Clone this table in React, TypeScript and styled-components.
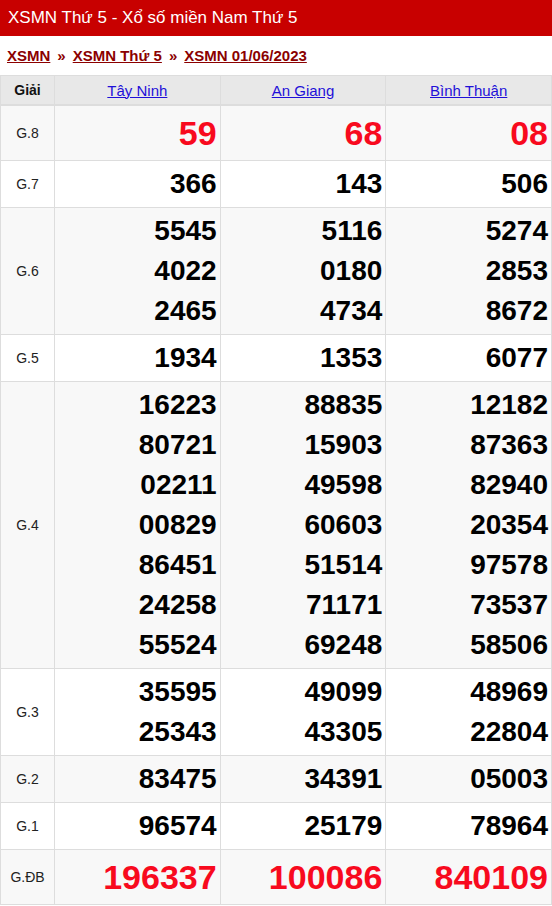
import React from 'react';
import styled, { createGlobalStyle } from 'styled-components';

const GlobalStyle = createGlobalStyle`
  body {
    margin: 0;
    background: #fff;
    font-family: "Liberation Sans", Arial, sans-serif;
  }
`;

const Page = styled.div`
  width: 552px;
`;

const TitleBar = styled.h1`
  margin: 0;
  height: 36px;
  line-height: 36px;
  padding: 0 8px;
  background: #c80000;
  color: #fff;
  font-size: 17px;
  font-weight: normal;
`;

const Breadcrumb = styled.nav`
  display: flex;
  align-items: center;
  height: 39px;
  padding: 0 7px;
  font-size: 15px;
  font-weight: bold;
  color: #8b0000;
`;

const Crumb = styled.a`
  color: #8b0000;
  text-decoration: underline;
`;

const Sep = styled.span`
  margin: 0 7px;
`;

const Table = styled.table`
  width: 552px;
  border-collapse: collapse;
  table-layout: fixed;
`;

const HeadCell = styled.th<{ $label?: boolean }>`
  height: 28px;
  padding: 0;
  background: #e8e8e8;
  border: 1px solid #ddd;
  border-bottom: 2px solid #ddd;
  font-size: ${p => (p.$label ? '14px' : '15px')};
  font-weight: ${p => (p.$label ? 'bold' : 'normal')};
  color: #111;
  text-align: center;
`;

const ProvinceLink = styled.a`
  color: #1f10d8;
  text-decoration: underline;
`;

const Row = styled.tr<{ $shade: boolean }>`
  background: ${p => (p.$shade ? '#f8f8f8' : '#fff')};
`;

const LabelCell = styled.td`
  border: 1px solid #ddd;
  padding: 0;
  text-align: center;
  font-size: 14px;
  color: #222;
`;

const NumCell = styled.td`
  border: 1px solid #ddd;
  padding: 3px 3px 3px 0;
  text-align: right;
  vertical-align: middle;
`;

const Num = styled.div<{ $big: boolean }>`
  font-size: ${p => (p.$big ? '34px' : '28px')};
  line-height: ${p => (p.$big ? '48px' : '40px')};
  font-weight: bold;
  color: ${p => (p.$big ? '#f80a1e' : '#000')};
`;

type Prize = { label: string; big?: boolean; values: string[][] };

const provinces = ['Tây Ninh', 'An Giang', 'Bình Thuận'];

const prizes: Prize[] = [
  { label: 'G.8', big: true, values: [['59'], ['68'], ['08']] },
  { label: 'G.7', values: [['366'], ['143'], ['506']] },
  {
    label: 'G.6',
    values: [
      ['5545', '4022', '2465'],
      ['5116', '0180', '4734'],
      ['5274', '2853', '8672'],
    ],
  },
  { label: 'G.5', values: [['1934'], ['1353'], ['6077']] },
  {
    label: 'G.4',
    values: [
      ['16223', '80721', '02211', '00829', '86451', '24258', '55524'],
      ['88835', '15903', '49598', '60603', '51514', '71171', '69248'],
      ['12182', '87363', '82940', '20354', '97578', '73537', '58506'],
    ],
  },
  {
    label: 'G.3',
    values: [
      ['35595', '25343'],
      ['49099', '43305'],
      ['48969', '22804'],
    ],
  },
  { label: 'G.2', values: [['83475'], ['34391'], ['05003']] },
  { label: 'G.1', values: [['96574'], ['25179'], ['78964']] },
  { label: 'G.ĐB', big: true, values: [['196337'], ['100086'], ['840109']] },
];

export default function App() {
  return (
    <Page>
      <GlobalStyle />
      <TitleBar>XSMN Thứ 5 - Xổ số miền Nam Thứ 5</TitleBar>
      <Breadcrumb>
        <Crumb>XSMN</Crumb>
        <Sep>»</Sep>
        <Crumb>XSMN Thứ 5</Crumb>
        <Sep>»</Sep>
        <Crumb>XSMN 01/06/2023</Crumb>
      </Breadcrumb>
      <Table>
        <colgroup>
          <col style={{ width: 54 }} />
          <col />
          <col />
          <col />
        </colgroup>
        <thead>
          <tr>
            <HeadCell $label>Giải</HeadCell>
            {provinces.map(p => (
              <HeadCell key={p}>
                <ProvinceLink>{p}</ProvinceLink>
              </HeadCell>
            ))}
          </tr>
        </thead>
        <tbody>
          {prizes.map((prize, i) => (
            <Row key={prize.label} $shade={i % 2 === 0}>
              <LabelCell>{prize.label}</LabelCell>
              {prize.values.map((col, j) => (
                <NumCell key={j}>
                  {col.map(n => (
                    <Num key={n} $big={!!prize.big}>
                      {n}
                    </Num>
                  ))}
                </NumCell>
              ))}
            </Row>
          ))}
        </tbody>
      </Table>
    </Page>
  );
}
